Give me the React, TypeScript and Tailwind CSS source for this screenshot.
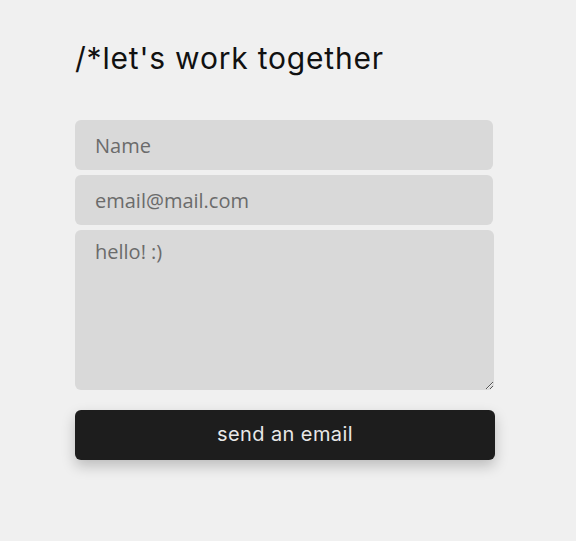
import React from "react";

export default function App() {
  return (
    <div className="min-h-[541px] w-full bg-[#f0f0f0]">
      <div className="ml-[75px] flex w-[420px] flex-col pt-[38px]">
        {/* heading */}
        <h1 className="font-['Inter',sans-serif] text-[30px] leading-[40px] tracking-[0.8px] text-[#111]">
          /*let's work together
        </h1>

        <form className="mt-[42px] flex flex-col" onSubmit={(e) => e.preventDefault()}>
          <input
            type="text"
            placeholder="Name"
            className="h-[50px] w-[418px] rounded-[6px] bg-[#d9d9d9] px-[20px] font-['Open_Sans',sans-serif] text-[20px] text-[#333] outline-none placeholder:text-[#6b6b6b]"
          />
          <input
            type="email"
            placeholder="email@mail.com"
            className="mt-[5px] h-[50px] w-[418px] rounded-[6px] bg-[#d9d9d9] px-[20px] font-['Open_Sans',sans-serif] text-[20px] text-[#333] outline-none placeholder:text-[#6b6b6b]"
          />
          <textarea
            placeholder="hello! :)"
            className="mt-[5px] h-[160px] w-[419px] rounded-[6px] bg-[#d9d9d9] px-[20px] pt-[8px] font-['Open_Sans',sans-serif] text-[20px] leading-[27px] text-[#333] outline-none placeholder:text-[#6b6b6b]"
          />
          <button
            type="submit"
            className="mt-[20px] h-[50px] w-[420px] rounded-[6px] bg-[#1d1d1d] pb-[3px] font-['Inter',sans-serif] text-[20px] tracking-[0.4px] text-[#e8e8e8] shadow-[0_6px_14px_rgba(0,0,0,0.22)]"
          >
            send an email
          </button>
        </form>
      </div>
    </div>
  );
}
